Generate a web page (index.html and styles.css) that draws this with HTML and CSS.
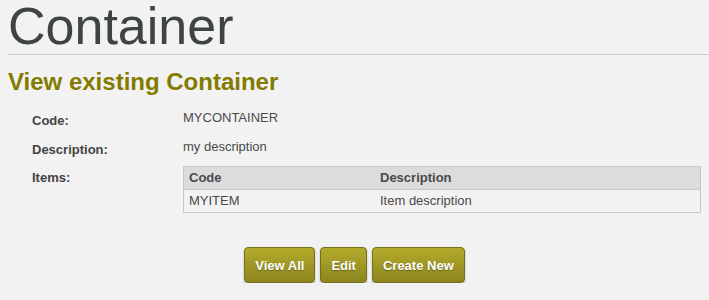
FILE: index.html
```html
<!DOCTYPE html>
<html>
<head>
  <title>Container</title>
  <link rel="stylesheet" href="styles.css">
</head>
<body>
  <header class="page-header">
    <h1>Container</h1>
  </header>

  <main>
    <h2>View existing Container</h2>

    <div class="details">
      <div class="row">
        <div class="label">Code:</div>
        <div class="value">MYCONTAINER</div>
      </div>
      <div class="row row-desc">
        <div class="label">Description:</div>
        <div class="value">my description</div>
      </div>
      <div class="row row-items">
        <div class="label">Items:</div>
        <div class="value">
          <table class="items">
            <tr>
              <th class="col-code">Code</th>
              <th>Description</th>
            </tr>
            <tr>
              <td>MYITEM</td>
              <td>Item description</td>
            </tr>
          </table>
        </div>
      </div>
    </div>

    <div class="actions">
      <button class="btn">View All</button>
      <button class="btn">Edit</button>
      <button class="btn">Create New</button>
    </div>
  </main>
</body>
</html>
```

FILE: styles.css
```css
html, body {
  margin: 0;
  padding: 0;
  background: #f2f2f2;
  font-family: "Liberation Sans", Arial, sans-serif;
  color: #4a4a4a;
}

.page-header {
  margin-left: 8px;
  border-bottom: 1px solid #cccccc;
  padding-bottom: 2px;
}

h1 {
  margin: 0;
  font-size: 52px;
  line-height: 52px;
  font-weight: normal;
  color: #3e4444;
}

h2 {
  margin: 15px 0 0 8px;
  font-size: 24px;
  line-height: 24px;
  font-weight: bold;
  color: #837b00;
}

.details {
  margin-top: 16px;
  padding-left: 32px;
  padding-right: 8px;
}

.row {
  display: flex;
  margin-bottom: 10px;
  font-size: 13px;
  line-height: 16px;
}

.row-desc {
  margin-bottom: 8px;
}

.row-items {
  margin-bottom: 0;
}

.label {
  width: 151px;
  flex: none;
  padding-top: 3px;
  font-weight: bold;
  color: #444444;
}

.row-items .label {
  padding-top: 4px;
}

.value {
  flex: 1;
}

.items {
  width: 100%;
  border-collapse: collapse;
  border: 1px solid #c8c8c8;
  font-size: 13px;
  line-height: 16px;
}

.items th, .items td {
  padding: 3px 5px;
  text-align: left;
  border-bottom: 1px solid #c8c8c8;
}

.items th {
  background: #dcdcdc;
  font-weight: bold;
  color: #4a4a4a;
}

.items .col-code {
  width: 181px;
}

.actions {
  display: flex;
  justify-content: center;
  gap: 5px;
  margin-top: 34px;
}

.btn {
  height: 36px;
  padding: 0 10px;
  border: 1px solid #76701a;
  border-radius: 4px;
  background: linear-gradient(#b3ab2b, #8c851f);
  box-shadow: 0 1px 2px rgba(0, 0, 0, 0.3);
  color: #ffffff;
  font-family: "Liberation Sans", Arial, sans-serif;
  font-size: 13px;
  font-weight: bold;
  text-shadow: 0 1px 1px rgba(0, 0, 0, 0.35);
  cursor: pointer;
}
```
